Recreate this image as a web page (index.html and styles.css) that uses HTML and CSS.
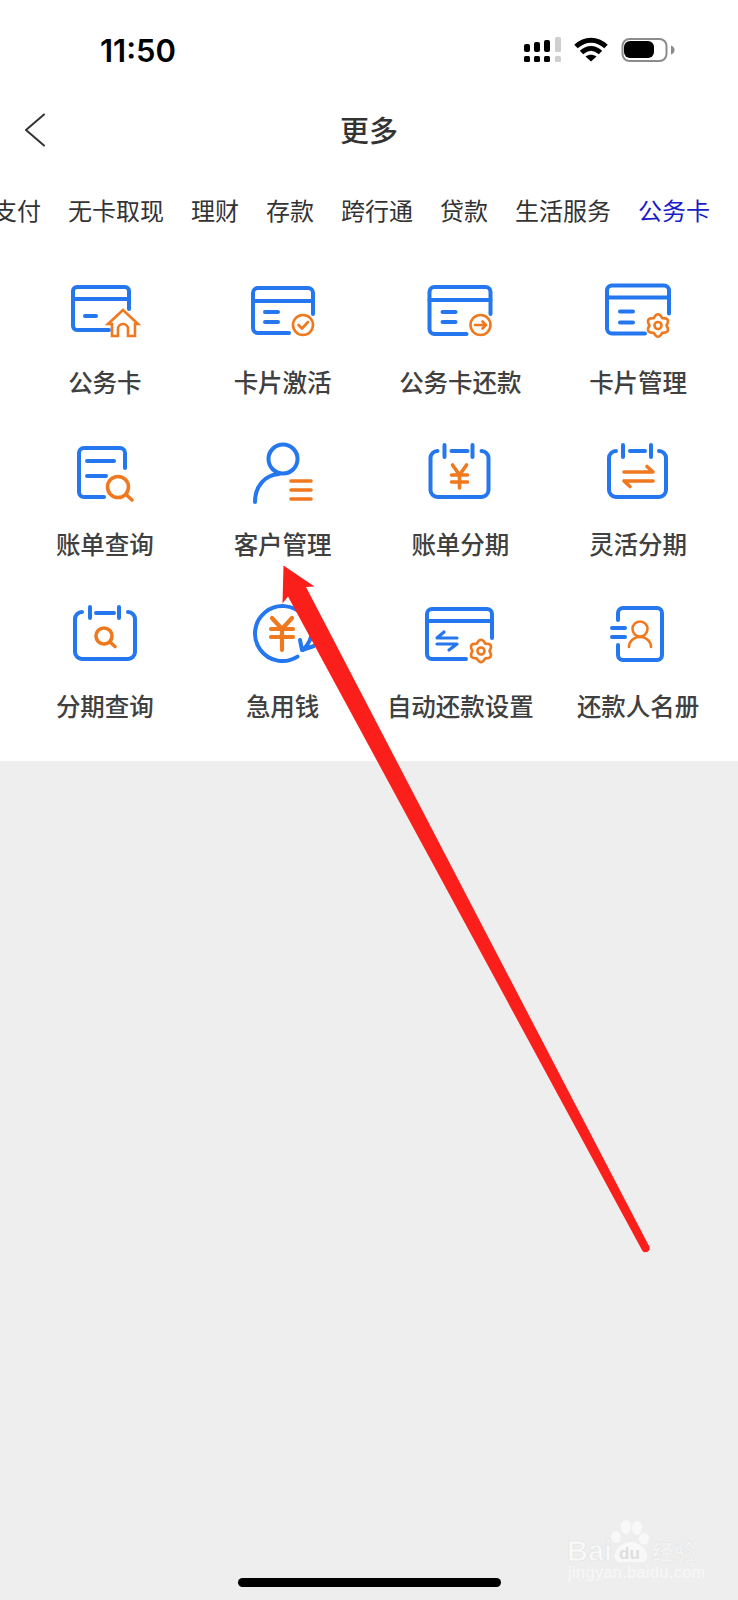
FILE: index.html
```html
<!DOCTYPE html>
<html lang="zh-CN">
<head>
<meta charset="utf-8">
<title>更多</title>
<link rel="stylesheet" href="styles.css">
</head>
<body>
<div class="page">
  <header class="status">
    <span class="time">11:50</span>
    <svg class="status-icons" width="152" height="30" viewBox="0 0 152 30">
      <g class="solid-k">
        <rect x="0" y="9" width="6" height="8" rx="2"/><rect x="10" y="7" width="6" height="10" rx="2"/><rect x="20" y="5" width="6" height="12" rx="2"/>
        <rect x="0" y="21" width="6" height="6" rx="1.5"/><rect x="10" y="21" width="6" height="6" rx="1.5"/><rect x="20" y="21" width="6" height="6" rx="1.5"/>
      </g>
      <g class="solid-g"><rect x="31" y="2" width="6" height="15" rx="1.5"/><rect x="31" y="21" width="6" height="6" rx="1.5"/></g>
      <path class="wifi" d="M52 11.5C61 3 73 3 82 11.5M57.5 17.5C63.5 12 70.5 12 76.5 17.5"/>
      <path class="solid-k" d="M67 26.5 61.5 21.5C65 19 69 19 72.5 21.5Z"/>
      <rect class="batt-frame" x="98.5" y="4" width="44" height="22" rx="7"/>
      <rect class="solid-k" x="100" y="6" width="30" height="17" rx="6"/>
      <path class="solid-g2" d="M147 10.5C149.500 11.500 150.500 13 150.500 15S149.500 18.500 147 19.500Z"/>
    </svg>
  </header>

  <nav class="nav">
    <svg class="back" width="22" height="34" viewBox="0 0 22 34"><path d="M20 1.500 2 17 20 32.500"/></svg>
    <h1 class="title">更多</h1>
  </nav>

  <div class="tabs">
    <span class="tab">支付</span><span class="tab">无卡取现</span><span class="tab">理财</span><span class="tab">存款</span><span class="tab">跨行通</span><span class="tab">贷款</span><span class="tab">生活服务</span><span class="tab active">公务卡</span>
  </div>

  <section class="grid">
    <a class="item">
      <svg class="ico" viewBox="0 0 80 64"><g transform="translate(-1 -1)"><g class="b"><path d="M65 30V12a4 4 0 0 0-4-4H13a4 4 0 0 0-4 4V47a4 4 0 0 0 4 4H45"/><path d="M9 20H65M21 37H32"/></g></g>
      <path class="o thin wf" d="M58 30 43 44H47V56H53V49a5 5 0 0 1 10 0V56H70V44H73Z"/></svg>
      <span class="label">公务卡</span>
    </a>
    <a class="item">
      <svg class="ico" viewBox="0 0 80 64"><g transform="translate(0 -1)"><g class="b"><path d="M70 35V14a5 5 0 0 0-5-5H15a5 5 0 0 0-5 5V49a5 5 0 0 0 5 5H46"/><path d="M10 22H70M22 33H35M22 43H35"/></g>
      <g class="o thin"><circle cx="60" cy="46" r="10"/><path d="M55.500 46 59 49.500 65 43"/></g></g></svg>
      <span class="label">卡片激活</span>
    </a>
    <a class="item">
      <svg class="ico" viewBox="0 0 80 64"><g transform="translate(0.500 -1)"><g class="b"><path d="M70 35V13a5 5 0 0 0-5-5H14a5 5 0 0 0-5 5V50a5 5 0 0 0 5 5H46"/><path d="M9 21H70M22 33H35M22 43H35"/></g>
      <g class="o thin"><circle cx="60" cy="46" r="10"/><path d="M54.500 46H65.500M62 42.500 65.500 46 62 49.500"/></g></g></svg>
      <span class="label">公务卡还款</span>
    </a>
    <a class="item">
      <svg class="ico" viewBox="0 0 80 64"><g transform="translate(0 -0.500)"><g class="b"><path d="M71 34V11a5 5 0 0 0-5-5H14a5 5 0 0 0-5 5V49a5 5 0 0 0 5 5H47"/><path d="M9 18H71M22 32H35M22 43H35"/></g>
      <g class="o thin" transform="translate(60 46)"><path d="M-4.250-7.360Q0-15 4.250-7.360 13-7.500 8.500 0 13 7.500 4.250 7.360 0 15-4.250 7.360-13 7.500-8.500 0-13-7.500-4.250-7.360Z"/><circle r="3.500"/></g></g></svg>
      <span class="label">卡片管理</span>
    </a>

    <a class="item">
      <svg class="ico" viewBox="0 0 80 64"><g class="b"><path d="M60 26V11a5 5 0 0 0-5-5H19a5 5 0 0 0-5 5V50a5 5 0 0 0 5 5H39"/><path d="M22 19H49M22 34H41"/></g>
      <g class="o"><circle cx="53" cy="45" r="10.500"/><path d="M61 52.500 67 58"/></g></svg>
      <span class="label">账单查询</span>
    </a>
    <a class="item">
      <svg class="ico" viewBox="0 0 80 64"><g class="b"><circle cx="40" cy="17" r="14.500"/><path d="M36 32C22 33 12 44 12 60"/></g>
      <path class="o" d="M48 39H68M48 48H68M48 57H68"/></svg>
      <span class="label">客户管理</span>
    </a>
    <a class="item">
      <svg class="ico" viewBox="0 0 80 64"><g transform="translate(0.500 0)"><g class="b"><path d="M17 9a7 7 0 0 0-7 7V48a7 7 0 0 0 7 7H61a7 7 0 0 0 7-7V16a7 7 0 0 0-7-7"/><path d="M24 3V15M52 3V15M31 9H47"/></g>
      <path class="o" d="M32 23 39 33 46 23M31 33H47M31 40H47M39 33V46"/></g></svg>
      <span class="label">账单分期</span>
    </a>
    <a class="item">
      <svg class="ico" viewBox="0 0 80 64"><g class="b"><path d="M18 9a7 7 0 0 0-7 7V48a7 7 0 0 0 7 7H61a7 7 0 0 0 7-7V16a7 7 0 0 0-7-7"/><path d="M25 3V15M53 3V15M32 9H47"/></g>
      <path class="o" d="M26 30H55L49 24.500M26 39H55M26 39 32 44.500"/></svg>
      <span class="label">灵活分期</span>
    </a>

    <a class="item">
      <svg class="ico" viewBox="0 0 80 64"><g class="b"><path d="M17 8a7 7 0 0 0-7 7V48a7 7 0 0 0 7 7H63a7 7 0 0 0 7-7V15a7 7 0 0 0-7-7"/><path d="M25 3V14M54 3V14M31 9H49"/></g>
      <g class="o"><circle cx="39" cy="32" r="8"/><path d="M45 38 50 42.500"/></g></svg>
      <span class="label">分期查询</span>
    </a>
    <a class="item">
      <svg class="ico" viewBox="0 0 80 64"><g class="b"><path d="M59.900 11.100A27.500 27.500 0 1 0 54.500 52.600"/><path d="M69 26C69 34 66 40 60 46M57 36 59 46 71 42"/></g>
      <path class="o heavy" d="M29 14 39 25 49 14M28 25H50M28 33H50M39 25V46"/></svg>
      <span class="label">急用钱</span>
    </a>
    <a class="item">
      <svg class="ico" viewBox="0 0 80 64"><g class="b"><path d="M72 34V10a5 5 0 0 0-5-5H12a5 5 0 0 0-5 5V50a5 5 0 0 0 5 5H46"/><path d="M7 17H72"/></g>
      <path class="b mid" d="M24 28 17 34H37M17 40H37L29 46"/>
      <g class="o thin" transform="translate(61 47)"><path d="M-4.250-7.360Q0-15 4.250-7.360 13-7.500 8.500 0 13 7.500 4.250 7.360 0 15-4.250 7.360-13 7.500-8.500 0-13-7.500-4.250-7.360Z"/><circle r="3.500"/></g></svg>
      <span class="label">自动还款设置</span>
    </a>
    <a class="item">
      <svg class="ico" viewBox="0 0 80 64"><g class="b"><path d="M20 16V9a5 5 0 0 1 5-5H59a5 5 0 0 1 5 5V51a5 5 0 0 1-5 5H25a5 5 0 0 1-5-5V41"/><path d="M14 24H27M14 33H27"/></g>
      <g class="o thin"><circle cx="42" cy="25" r="7.500"/><path d="M31 43C31 37 36 33 42 33S53 37 53 43"/></g></svg>
      <span class="label">还款人名册</span>
    </a>
  </section>

  <div class="home-bar"></div>

  <svg class="watermark" width="140" height="72" viewBox="0 0 140 72">
    <g class="paw">
      <ellipse cx="49" cy="21" rx="5" ry="6"/><ellipse cx="59" cy="11" rx="5" ry="7"/><ellipse cx="70" cy="12" rx="5" ry="7"/><ellipse cx="77" cy="23" rx="5" ry="6"/>
      <path d="M64 26C74 26 82 36 80 42 78 48 70 46 64 46 56 46 50 48 48 42 46 36 54 26 64 26Z"/>
    </g>
    <text class="wm-bai" x="0" y="45">Bai</text>
    <text class="wm-du" x="52" y="43">du</text>
    <text class="wm-cn" x="85" y="44">经验</text>
    <text class="wm-url" x="1" y="62">jingyan.baidu.com</text>
  </svg>

  <svg class="arrow" width="738" height="1600" viewBox="0 0 738 1600">
    <path d="M283.500 565.500 314.500 586.500 306 587 648.500 1245A3.500 3.500 0 0 1 642.500 1251L288 596.500 282.500 603.500Z"/>
  </svg>
</div>
</body>
</html>
```
FILE: styles.css
```css
* { box-sizing: border-box; }
html, body { margin: 0; padding: 0; }
body {
  background: #eeeeee;
  font-family: "Noto Sans CJK SC", "Noto Sans", sans-serif;
  color: #333;
}
.page {
  position: relative;
  width: 738px;
  height: 1600px;
  overflow: hidden;
  display: flex;
  flex-direction: column;
}
.status, .nav, .tabs, .grid { background: #fff; }
.status {
  height: 100px;
  display: flex;
  align-items: center;
  justify-content: space-between;
  padding: 0 62px 0 100px;
  flex: none;
}
.time {
  font-family: Inter, "Liberation Sans", sans-serif;
  font-weight: 600;
  font-size: 31px;
  color: #000;
  line-height: 1;
}
.status-icons { display: block; }
.solid-k { fill: #000; }
.solid-g { fill: #cfcfcf; }
.solid-g2 { fill: #8a8a8a; }
.wifi { fill: none; stroke: #000; stroke-width: 5; }
.batt-frame { fill: none; stroke: #8c8c8c; stroke-width: 2; }

.nav {
  position: relative;
  height: 60px;
  display: flex;
  align-items: center;
  justify-content: center;
  padding-bottom: 2px;
  flex: none;
}
.back {
  position: absolute;
  left: 24px;
  top: 13px;
}
.back path { fill: none; stroke: #333; stroke-width: 2; stroke-linecap: round; stroke-linejoin: round; }
.title {
  margin: 0;
  font-size: 29px;
  font-weight: 500;
  line-height: 40px;
  color: #333;
}
.tabs {
  display: flex;
  gap: 27px;
  padding: 33px 0 0 0;
  height: 68px;
  overflow: hidden;
  flex: none;
}
.tab {
  flex: none;
  font-size: 24px;
  line-height: 34px;
  color: #333;
}
.tab:first-child { margin-left: -7px; }
.tab.active { color: #1a1ac8; }
.grid {
  display: grid;
  grid-template-columns: repeat(4, 177.75px);
  row-gap: 43.500px;
  padding: 52px 0 38.500px 16px;
  flex: none;
}
.item {
  display: flex;
  flex-direction: column;
  align-items: center;
  gap: 20.500px;
}
.ico { display: block; width: 80px; height: 64px; }
.label {
  font-size: 24.500px;
  line-height: 34px;
  font-weight: 500;
  color: #404040;
  white-space: nowrap;
}
.b, .b path, .b circle { fill: none; stroke: #2477ee; stroke-width: 4; stroke-linecap: round; stroke-linejoin: round; }
.o, .o path, .o circle { fill: none; stroke: #f0781e; stroke-width: 3.600; stroke-linecap: round; stroke-linejoin: round; }
.o.thin, .o.thin path, .o.thin circle { stroke-width: 2.600; }
.o.wf { fill: #fff; stroke-linejoin: miter; }
.o.heavy { stroke-width: 4.200; }
.b.mid { stroke-width: 3.200; }

.home-bar {
  width: 263px;
  height: 9px;
  margin: auto 0 13px 238px;
  background: #000;
  border-radius: 5px;
  flex: none;
}
.watermark {
  position: absolute;
  left: 567px;
  top: 1516px;
}
.paw { fill: #f8f8f8; }
.wm-bai { font: 700 29px "Liberation Sans", sans-serif; fill: #f8f8f8; stroke: #e2e2e2; stroke-width: 0.600; }
.wm-du { font: 700 17px "Liberation Sans", sans-serif; fill: #dedede; }
.wm-cn { font: 500 22px "Noto Sans CJK SC", sans-serif; fill: #f8f8f8; stroke: #e2e2e2; stroke-width: 0.400; }
.wm-url { font: 400 16px "Liberation Sans", sans-serif; fill: #f8f8f8; letter-spacing: 0.500px; }
.arrow {
  position: absolute;
  left: 0;
  top: 0;
}
.arrow path { fill: #fb1f1c; }
```
